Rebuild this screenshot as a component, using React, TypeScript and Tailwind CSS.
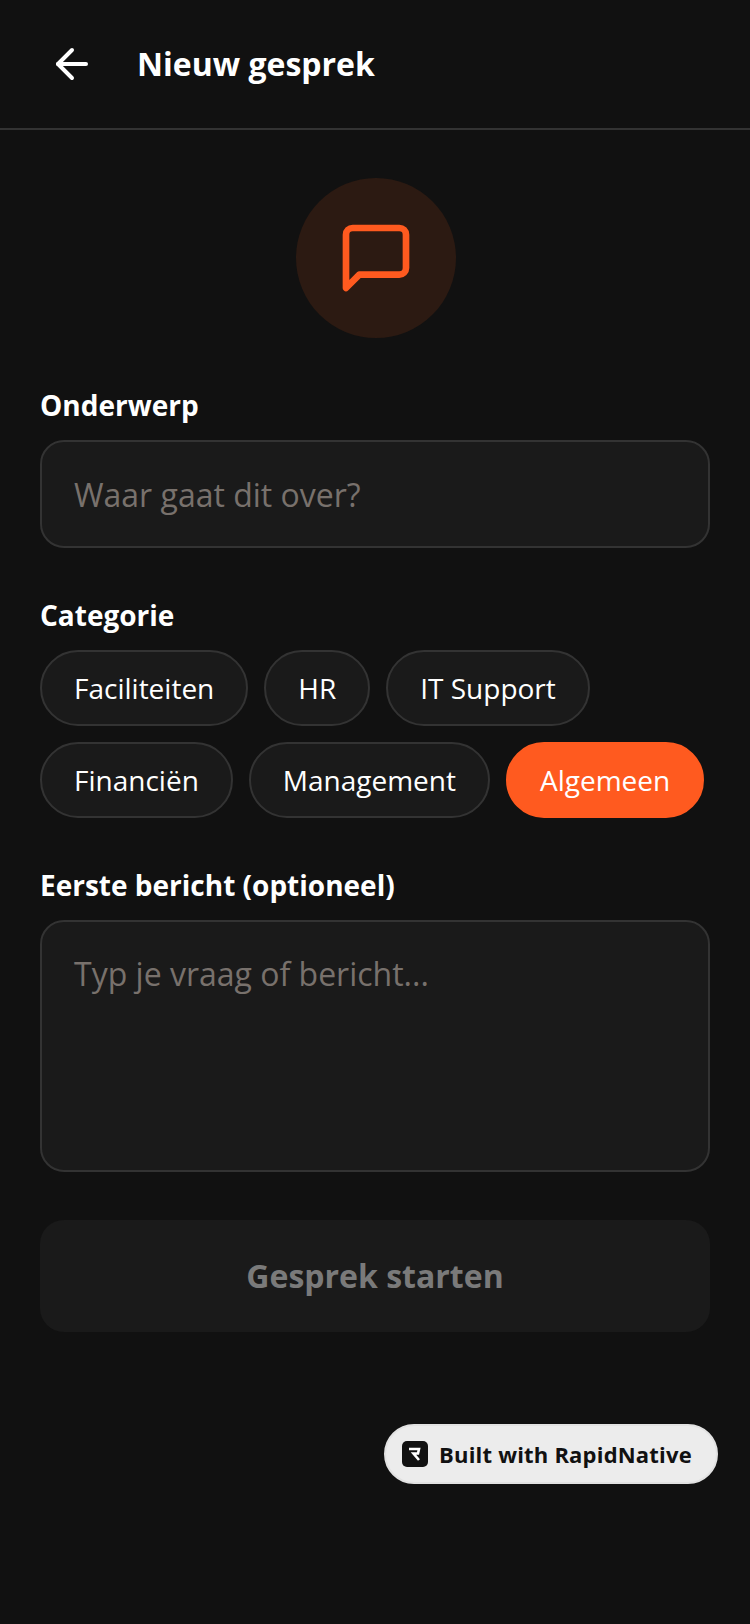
import { ArrowLeft } from 'lucide-react';

const categories = ['Faciliteiten', 'HR', 'IT Support', 'Financiën', 'Management', 'Algemeen'];

function CategoryChip({ label, active }: { label: string; active: boolean }) {
  return (
    <button
      className={`h-[76px] rounded-full border-2 px-[32px] text-[28px] leading-none text-white ${
        active ? 'border-[#ff5a1f] bg-[#ff5a1f]' : 'border-[#333333] bg-[#1a1a1a]'
      }`}
    >
      {label}
    </button>
  );
}

export default function App() {
  return (
    <div className="relative h-[1624px] w-[750px] overflow-hidden bg-[#111111] font-['Open_Sans',sans-serif]">
      {/* Header */}
      <header className="flex h-[130px] items-center border-b-2 border-[#333333] pl-[48px]">
        <ArrowLeft size={48} color="#ffffff" strokeWidth={2} />
        <h1 className="ml-[41px] text-[32px] leading-none font-bold text-white">Nieuw gesprek</h1>
      </header>

      <main className="px-[40px]">
        {/* Icon */}
        <div className="mt-[48px] flex justify-center pl-[2px]">
          <div className="flex h-[160px] w-[160px] items-center justify-center rounded-full bg-[#2c1a12]">
            <svg width="80" height="80" viewBox="0 0 24 24" fill="none" stroke="#ff5a1f" strokeWidth="2" strokeLinecap="round" strokeLinejoin="round">
              <path d="M21 15a2 2 0 0 1-2 2H7l-4 4V5a2 2 0 0 1 2-2h14a2 2 0 0 1 2 2z" />
            </svg>
          </div>
        </div>

        <label className="mt-[48px] mb-[16px] block text-[28px] leading-[38px] font-bold text-white">Onderwerp</label>
        <input
          placeholder="Waar gaat dit over?"
          className="block h-[108px] w-full rounded-[24px] border-2 border-[#333333] bg-[#1a1a1a] px-[32px] text-[32px] text-white outline-none placeholder:text-[#78716c]"
        />

        <label className="mt-[48px] mb-[16px] block text-[28px] leading-[38px] font-bold text-white">Categorie</label>
        <div className="flex flex-wrap gap-[16px]">
          {categories.map((c) => (
            <CategoryChip key={c} label={c} active={c === 'Algemeen'} />
          ))}
        </div>

        <label className="mt-[48px] mb-[16px] block text-[28px] leading-[38px] font-bold text-white">Eerste bericht (optioneel)</label>
        <textarea
          placeholder="Typ je vraag of bericht..."
          className="block h-[252px] w-full resize-none rounded-[24px] border-2 border-[#333333] bg-[#1a1a1a] px-[32px] py-[30px] text-[32px] leading-[44px] text-white outline-none placeholder:text-[#78716c]"
        />

        <button className="mt-[48px] h-[112px] w-full rounded-[24px] bg-[#1a1a1a] text-[32px] font-bold text-[#7a7a7a]">
          Gesprek starten
        </button>
      </main>

      {/* Badge */}
      <div className="absolute top-[1424px] left-[384px] flex h-[60px] w-[334px] items-center gap-[11px] rounded-full border-2 border-[#e2e2e2] bg-[#ececec] pl-[16px]">
        <div className="flex h-[26px] w-[26px] items-center justify-center rounded-[5px] bg-[#111111]">
          <svg width="16" height="16" viewBox="0 0 16 16" fill="none" stroke="#ffffff" strokeWidth="2.600">
            <path d="M2 3h10l-1 4.500H6.500L12 14" />
          </svg>
        </div>
        <span className="text-[22px] leading-none font-bold tracking-[0.2px] text-[#111111]">Built with RapidNative</span>
      </div>
    </div>
  );
}
